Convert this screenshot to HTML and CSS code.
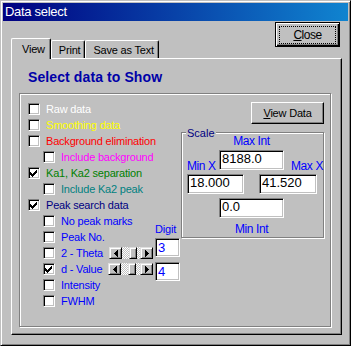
FILE: index.html
```html
<!DOCTYPE html>
<html lang="en">
<head>
    <meta charset="UTF-8">
    <meta name="viewport" content="width=device-width, initial-scale=1.0">
    <title>Data select</title>
    <link rel="stylesheet" href="styles.css">
</head>
<body>

<div class="window">
    <div class="titlebar">Data select</div>

    <div class="head">
        <div class="tabs">
            <div class="tab active">View</div>
            <div class="tab">Print</div>
            <div class="tab">Save as Text</div>
        </div>
        <button class="btn default"><span class="focus"><u>C</u>lose</span></button>
    </div>

    <div class="panel">
        <h2>Select data to Show</h2>

        <div class="group">
            <div class="options">
                <div class="row c-white"><span class="box"></span>Raw data</div>
                <div class="row c-yellow"><span class="box"></span>Smoothing data</div>
                <div class="row c-red"><span class="box"></span>Background elimination</div>
                <div class="row sub c-magenta"><span class="box"></span>Include background</div>
                <div class="row c-green">
                    <span class="box"><svg class="tick" width="7" height="7" viewBox="0 0 7 7"><path d="M6 0h1v1h-1zM5 1h2v1h-2zM0 2h1v1h-1zM4 2h3v1h-3zM0 3h2v1h-2zM3 3h3v1h-3zM0 4h5v1h-5zM1 5h3v1h-3zM2 6h1v1h-1z"/></svg></span>Ka1, Ka2 separation
                </div>
                <div class="row sub c-teal"><span class="box"></span>Include Ka2 peak</div>
                <div class="row c-navy">
                    <span class="box"><svg class="tick" width="7" height="7" viewBox="0 0 7 7"><path d="M6 0h1v1h-1zM5 1h2v1h-2zM0 2h1v1h-1zM4 2h3v1h-3zM0 3h2v1h-2zM3 3h3v1h-3zM0 4h5v1h-5zM1 5h3v1h-3zM2 6h1v1h-1z"/></svg></span>Peak search data
                </div>

                <div class="peak">
                    <div class="peak-list">
                        <div class="row sub c-blue"><span class="box"></span>No peak marks</div>
                        <div class="row sub c-blue"><span class="box"></span>Peak No.</div>
                        <div class="row sub c-blue">
                            <span class="box"></span>2 - Theta
                            <span class="spin">
                                <span class="arrow"><svg width="4" height="7" viewBox="0 0 4 7"><path d="M3 0h1v7h-1zM2 1h1v5h-1zM1 2h1v3h-1zM0 3h1v1h-1z"/></svg></span>
                                <span class="track"><span class="thumb"></span></span>
                                <span class="arrow"><svg width="4" height="7" viewBox="0 0 4 7"><path d="M0 0h1v7h-1zM1 1h1v5h-1zM2 2h1v3h-1zM3 3h1v1h-1z"/></svg></span>
                            </span>
                        </div>
                        <div class="row sub c-blue">
                            <span class="box"><svg class="tick" width="7" height="7" viewBox="0 0 7 7"><path d="M6 0h1v1h-1zM5 1h2v1h-2zM0 2h1v1h-1zM4 2h3v1h-3zM0 3h2v1h-2zM3 3h3v1h-3zM0 4h5v1h-5zM1 5h3v1h-3zM2 6h1v1h-1z"/></svg></span>d - Value
                            <span class="spin">
                                <span class="arrow"><svg width="4" height="7" viewBox="0 0 4 7"><path d="M3 0h1v7h-1zM2 1h1v5h-1zM1 2h1v3h-1zM0 3h1v1h-1z"/></svg></span>
                                <span class="track"><span class="thumb"></span></span>
                                <span class="arrow"><svg width="4" height="7" viewBox="0 0 4 7"><path d="M0 0h1v7h-1zM1 1h1v5h-1zM2 2h1v3h-1zM3 3h1v1h-1z"/></svg></span>
                            </span>
                        </div>
                        <div class="row sub c-blue"><span class="box"></span>Intensity</div>
                        <div class="row sub c-blue"><span class="box"></span>FWHM</div>
                    </div>

                    <div class="digit">
                        <div class="digit-label">Digit</div>
                        <div class="edit">3</div>
                        <div class="edit">4</div>
                    </div>
                </div>
            </div>

            <div class="side">
                <button class="btn view"><u>V</u>iew Data</button>

                <div class="scale">
                    <span class="legend">Scale</span>
                    <div class="scale-title">Max Int</div>
                    <div class="scale-row">
                        <span class="scale-side">Min X</span>
                        <div class="edit">8188.0</div>
                        <span class="scale-side right">Max X</span>
                    </div>
                    <div class="scale-pair">
                        <div class="edit min-x">18.000</div>
                        <div class="edit max-x">41.520</div>
                    </div>
                    <div class="edit min-int">0.0</div>
                    <div class="scale-title bottom">Min Int</div>
                </div>
            </div>
        </div>
    </div>
</div>

</body>
</html>
```

FILE: styles.css
```css
body {
    margin: 0;
    background-color: #c0c0c0;
    font-family: "Liberation Sans", Arial, sans-serif;
    font-size: 11px;
    letter-spacing: -0.2px;
    color: #000;
}
.window {
    width: 351px;
    height: 346px;
    box-sizing: border-box;
    padding: 2px;
    border: 1px solid;
    border-color: #c0c0c0 #000 #000 #c0c0c0;
    box-shadow: inset 1px 1px #fff, inset -1px -1px #808080;
    background-color: #c0c0c0;
}
.titlebar {
    height: 18px;
    line-height: 18px;
    padding-left: 2px;
    background: linear-gradient(to right, #000080, #1084d0);
    color: #fff;
    font-size: 13px;
    letter-spacing: -0.3px;
}

/* tabs + close button */
.head {
    display: flex;
    justify-content: space-between;
    align-items: flex-end;
    height: 37px;
    padding: 0 8px;
}
.tabs {
    display: flex;
    align-items: flex-end;
}
.tab {
    height: 18px;
    box-sizing: border-box;
    padding: 1px 4px 0 7px;
    line-height: 16px;
    border: 1px solid;
    border-bottom: none;
    border-color: #fff #000 #000 #fff;
    border-radius: 2px 2px 0 0;
    box-shadow: inset -1px 0 #808080;
    background-color: #c0c0c0;
}
.tab.active {
    position: relative;
    z-index: 1;
    height: 21px;
    margin-bottom: -1px;
    padding: 0 5px 0 10px;
    line-height: 20px;
}

.btn {
    margin: 0;
    padding: 0;
    box-sizing: border-box;
    font-family: inherit;
    font-size: 11px;
    letter-spacing: inherit;
    color: #000;
    background-color: #c0c0c0;
    border: 1px solid;
    border-color: #fff #000 #000 #fff;
    box-shadow: inset -1px -1px #808080;
}
.btn.default {
    align-self: flex-start;
    margin-top: 1px;
    width: 65px;
    height: 25px;
    padding: 3px 3px 2px;
    border-color: #000;
    box-shadow: inset 1px 1px #fff, inset -1px -1px #000, inset -2px -2px #808080;
    font-size: 12px;
    letter-spacing: -0.5px;
}
.focus {
    display: block;
    height: 18px;
    box-sizing: border-box;
    border: 1px dotted #000;
    line-height: 16px;
}
.btn.view {
    width: 73px;
    height: 22px;
    margin-right: 1px;
    line-height: 20px;
}

/* tab page */
.panel {
    width: 331px;
    height: 277px;
    box-sizing: border-box;
    margin-left: 8px;
    padding: 10px 0 0 7px;
    border: 1px solid;
    border-color: #fff #000 #000 #fff;
    box-shadow: inset -1px -1px #808080;
}
h2 {
    margin: 0 0 8px 9px;
    font-size: 14px;
    line-height: 16px;
    letter-spacing: 0.1px;
    color: #0000a8;
}
.group {
    display: flex;
    width: 312px;
    height: 234px;
    box-sizing: border-box;
    padding: 7px 0 0 8px;
    border: 1px solid #808080;
    box-shadow: inset 1px 1px #fff, 1px 1px #fff;
}
.options {
    width: 153px;
    flex: none;
}
.row {
    display: flex;
    align-items: center;
    gap: 6px;
    height: 16px;
    white-space: nowrap;
}
.row.sub {
    padding-left: 15px;
}
.box {
    display: block;
    flex: none;
    width: 12px;
    height: 12px;
    box-sizing: border-box;
    border: 1px solid;
    border-color: #808080 #fff #fff #808080;
    box-shadow: inset 1px 1px #000, inset -1px -1px #c0c0c0;
    background-color: #fff;
}
.tick {
    display: block;
    margin: 2px 0 0 1px;
    fill: #000;
}
.c-white { color: #fff; }
.c-yellow { color: #ff0; }
.c-red { color: #f00; }
.c-magenta { color: #f0f; }
.c-green { color: #008000; }
.c-teal { color: #008080; }
.c-navy { color: #000080; }
.c-blue { color: #00f; }

/* peak options with digit boxes */
.peak {
    display: flex;
    gap: 2px;
}
.peak-list {
    width: 125px;
}
.spin {
    display: flex;
    width: 46px;
    height: 12px;
    margin-left: auto;
}
.arrow, .thumb {
    display: flex;
    align-items: center;
    justify-content: center;
    box-sizing: border-box;
    border: 1px solid;
    border-color: #dfdfdf #000 #000 #dfdfdf;
    box-shadow: inset 1px 1px #fff, inset -1px -1px #808080;
    background-color: #c0c0c0;
}
.arrow {
    width: 13px;
    height: 12px;
}
.arrow svg {
    display: block;
    fill: #000;
}
.track {
    display: flex;
    flex: 1;
    padding-left: 7px;
    background: repeating-conic-gradient(#fff 0 25%, #c0c0c0 0 50%) 0 0 / 2px 2px;
}
.thumb {
    width: 8px;
    height: 12px;
}
.digit {
    width: 25px;
    margin-top: 10px;
    color: #00f;
}
.digit-label {
    line-height: 13px;
}
.edit {
    box-sizing: border-box;
    height: 20px;
    padding: 1px 2px 0;
    border: 1px solid;
    border-color: #808080 #fff #fff #808080;
    box-shadow: inset 1px 1px #000, inset -1px -1px #c0c0c0;
    background-color: #fff;
    color: #000;
    font-size: 13px;
    line-height: 13px;
    letter-spacing: 0;
    white-space: nowrap;
    overflow: hidden;
}
.digit .edit {
    height: 19px;
    margin-top: 2px;
    line-height: 15px;
    color: #00f;
}
.digit .edit + .edit {
    margin-top: 5px;
}

/* scale frame */
.side {
    width: 144px;
    margin-top: 1px;
    display: flex;
    flex-direction: column;
    align-items: flex-end;
}
.scale {
    position: relative;
    align-self: flex-start;
    width: 143px;
    height: 106px;
    box-sizing: border-box;
    margin-top: 8px;
    padding: 1px 0 0 5px;
    border: 1px solid #808080;
    box-shadow: inset 1px 1px #fff, 1px 1px #fff;
    color: #00f;
    font-size: 12px;
    letter-spacing: -0.4px;
}
.legend {
    position: absolute;
    top: -6px;
    left: 4px;
    padding: 0 1px;
    background-color: #c0c0c0;
    color: #000080;
    font-size: 11px;
    line-height: 13px;
    letter-spacing: 0;
}
.scale-title {
    width: 65px;
    margin-left: 32px;
    text-align: center;
    line-height: 14px;
}
.scale-title.bottom {
    margin-top: 4px;
}
.scale-row {
    display: grid;
    grid-template-columns: 32px 65px 1fr;
    margin-top: 2px;
}
.scale-side {
    align-self: end;
    line-height: 12px;
    margin-bottom: -2px;
}
.scale-side.right {
    justify-self: end;
}
.scale-pair {
    display: flex;
    gap: 15px;
    margin-top: 4px;
}
.min-x { width: 57px; }
.max-x { width: 58px; }
.min-int {
    width: 65px;
    margin: 4px 0 0 32px;
}
```
